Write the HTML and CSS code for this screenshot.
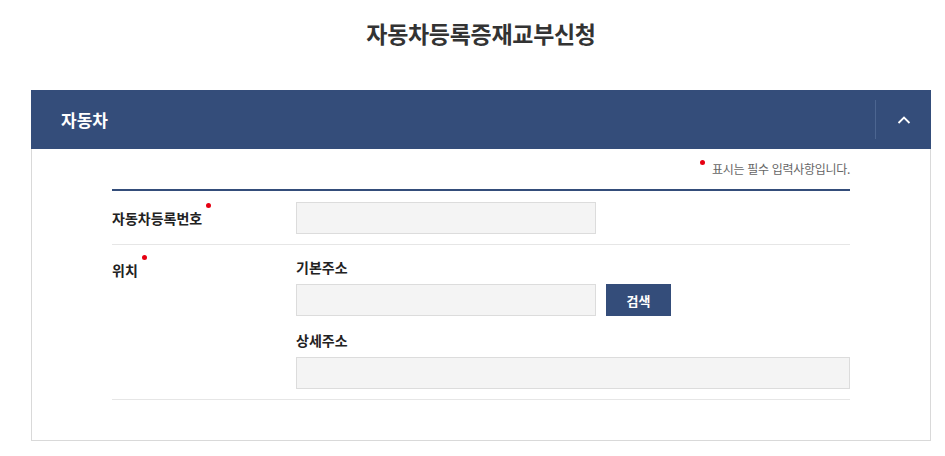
FILE: index.html
```html
<!DOCTYPE html>
<html lang="ko">
<head>
<meta charset="utf-8">
<title>자동차등록증재교부신청</title>
<link rel="stylesheet" href="styles.css">
</head>
<body>
<div class="page">
  <h1 class="title">자동차등록증재교부신청</h1>
  <section class="panel">
    <div class="panel-head">
      <h2 class="panel-title">자동차</h2>
      <button class="toggle" type="button" aria-label="접기">
        <svg width="14" height="9" viewBox="0 0 14 9"><path d="M1.5 8 L7 2.5 L12.5 8" fill="none" stroke="#fff" stroke-width="1.8"/></svg>
      </button>
    </div>
    <div class="panel-body">
      <p class="note"><span class="note-dot"></span>표시는 필수 입력사항입니다.</p>
      <div class="form">
        <div class="row row-single">
          <div class="label req">자동차등록번호</div>
          <div class="field">
            <input class="input input-short" type="text">
          </div>
        </div>
        <div class="row">
          <div class="label label-top req">위치</div>
          <div class="field">
            <div class="sub-label">기본주소</div>
            <div class="inline">
              <input class="input input-short" type="text">
              <button class="btn" type="button">검색</button>
            </div>
            <div class="sub-label sub-label-gap">상세주소</div>
            <input class="input input-full" type="text">
          </div>
        </div>
      </div>
    </div>
  </section>
</div>
</body>
</html>
```
FILE: styles.css
```css
* { box-sizing: border-box; }
html, body { margin: 0; padding: 0; background: #fff; }
body {
  font-family: "Noto Sans CJK KR", "Noto Sans", sans-serif;
  color: #333;
}
.page {
  width: 900px;
  margin: 0 0 0 31px;
  padding-top: 18px;
}
.title {
  margin: 0;
  font-size: 23px;
  line-height: 30px;
  font-weight: 700;
  text-align: center;
  color: #333;
  letter-spacing: -0.3px;
  height: 72px;
}
.panel {
  width: 900px;
}
.panel-head {
  height: 59px;
  background: #344d7a;
  display: flex;
  align-items: center;
  justify-content: space-between;
}
.panel-title {
  margin: 0 0 0 30px;
  font-size: 17px;
  font-weight: 700;
  color: #fff;
  line-height: 20px;
}
.toggle {
  width: 56px;
  height: 39px;
  border: 0;
  border-left: 1px solid #4c6590;
  background: transparent;
  display: flex;
  align-items: center;
  justify-content: center;
  padding: 0;
  margin: 0;
}
.toggle svg { display: block; }
.panel-body {
  border: 1px solid #d9d9d9;
  border-top: 0;
  padding: 10px 80px 40px 80px;
}
.note {
  margin: 0;
  text-align: right;
  font-size: 12px;
  line-height: 20px;
  color: #666;
  letter-spacing: -0.3px;
  height: 30px;
}
.note-dot {
  display: inline-block;
  width: 5px;
  height: 5px;
  border-radius: 50%;
  background: #e60012;
  vertical-align: 9px;
  margin-right: 7px;
}
.form {
  border-top: 2px solid #344d7a;
}
.row {
  display: flex;
  border-bottom: 1px solid #e6e6e6;
  padding: 12px 0 10px;
}
.row-single {
  align-items: center;
  padding: 11px 0 10px;
}
.label {
  width: 184px;
  flex: none;
  font-size: 14px;
  font-weight: 700;
  line-height: 20px;
  color: #222;
}
.label-top { padding-top: 3px; }
.req::after {
  content: "";
  display: inline-block;
  width: 5px;
  height: 5px;
  border-radius: 50%;
  background: #e60012;
  margin-left: 4px;
  vertical-align: top;
  position: relative;
  top: -5px;
}
.field { flex: 1; }
.sub-label {
  font-size: 14px;
  font-weight: 700;
  line-height: 20px;
  color: #222;
  margin-bottom: 7px;
}
.sub-label-gap { margin-top: 14px; }
.inline {
  display: flex;
  gap: 10px;
}
.input {
  display: block;
  height: 32px;
  border: 1px solid #dcdcdc;
  background: #f4f4f4;
  margin: 0;
  padding: 0 10px;
  font: inherit;
}
.input-short { width: 300px; }
.input-full { width: 100%; }
.btn {
  width: 65px;
  height: 32px;
  border: 0;
  background: #344d7a;
  color: #fff;
  font-family: inherit;
  font-size: 13px;
  font-weight: 700;
  padding: 0;
  margin: 0;
}
```
